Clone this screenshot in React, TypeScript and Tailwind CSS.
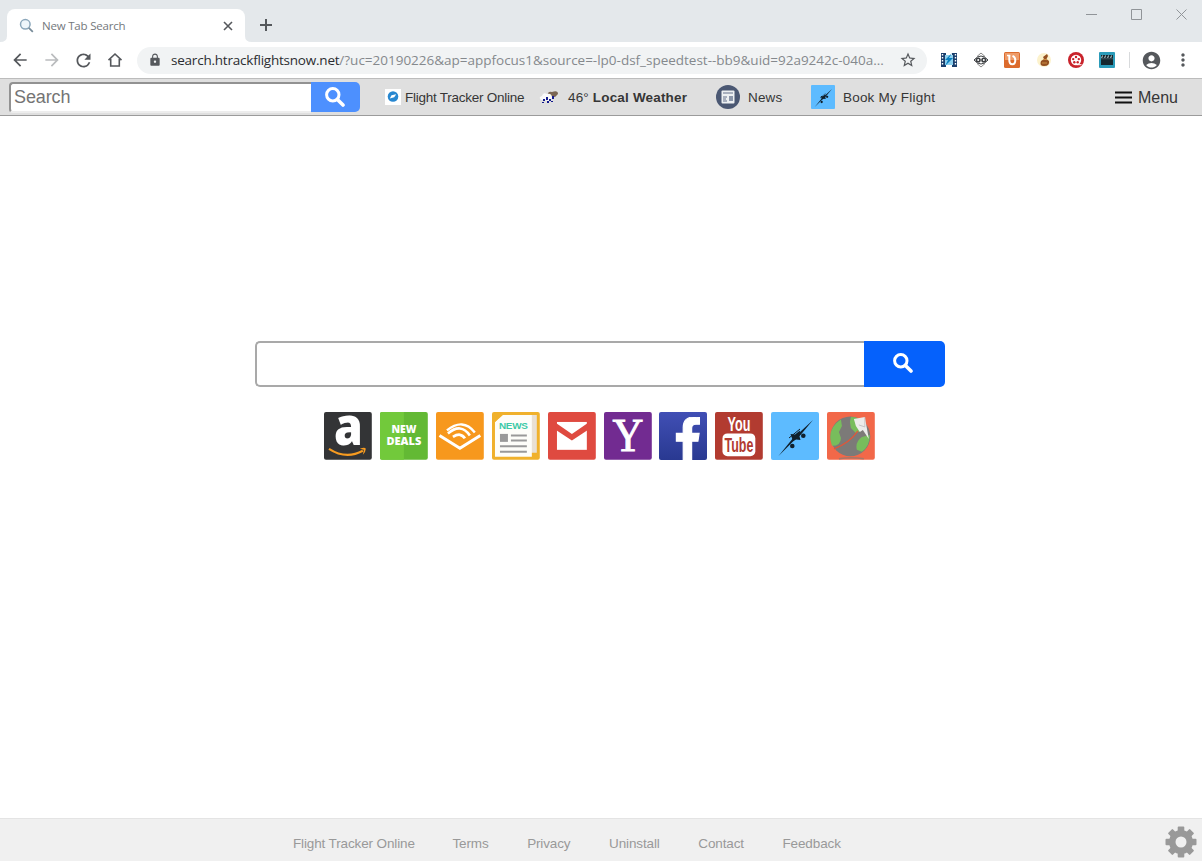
import type { ReactNode } from "react"
import { MdAccountCircle, MdArrowBack, MdArrowForward, MdLock, MdMoreVert, MdRefresh, MdStarBorder } from "react-icons/md"
import { FaFacebookF } from "react-icons/fa"

function SearchIcon({ className }: { className: string }) {
  return (
    <svg viewBox="0 0 20 20" className={className} fill="none" stroke="currentColor">
      <circle cx="7.8" cy="7.8" r="6.2" strokeWidth="3" />
      <path d="M12.4 12.4 18 18" strokeWidth="3.6" strokeLinecap="round" />
    </svg>
  )
}

function Plane({ className }: { className: string }) {
  return (
    <svg viewBox="0 0 48 48" className={className}>
      <rect width="48" height="48" rx="2" fill="#5dbbff" />
      <path d="M7.5 44 20.5 28l3-4 5.5-4L42 8 29.5 23l-4.5 4-3.5 3z" fill="#10202c" />
      <path d="m19.5 22 4.5.5 5-4-.5 6 1 3.5-4.5-.5-3 1.5z" fill="#10202c" />
      <path d="m18 26 11-9" stroke="#10202c" />
      <circle cx="32.3" cy="23.7" r="2.3" fill="#10202c" />
      <circle cx="21.3" cy="34" r="2.3" fill="#10202c" />
    </svg>
  )
}

function TabStrip() {
  return (
    <div className="flex h-[42px] shrink-0 bg-[#e4e8eb]">
      <svg viewBox="0 0 7 6" className="mt-auto h-1.5 w-[7px] fill-white">
        <path d="M7 0v6H0q7 0 7-6" />
      </svg>
      <div className="mt-[9px] flex w-[238px] items-center rounded-t-lg bg-white pl-3 pr-[11px]">
        <svg viewBox="0 0 16 16" className="h-4 w-4" fill="none">
          <circle cx="6.3" cy="6.3" r="4.8" stroke="#8ba7bb" strokeWidth="1.5" fill="#eef6fb" />
          <path d="m9.8 9.8 4 4" stroke="#778b99" strokeWidth="1.8" />
        </svg>
        <span className="ml-[7px] flex-1 whitespace-nowrap text-[11.5px] tracking-[-0.2px] text-[#74787c]">New Tab Search</span>
        <svg viewBox="0 0 12 12" className="h-3 w-3" stroke="#55585c" strokeWidth="1.6">
          <path d="m2 2 8 8M10 2l-8 8" />
        </svg>
      </div>
      <svg viewBox="0 0 7 6" className="mt-auto h-1.5 w-[7px] fill-white">
        <path d="M0 0v6h7q-7 0-7-6" />
      </svg>
      <svg viewBox="0 0 14 14" className="ml-[7px] mt-[18px] h-3.5 w-3.5" stroke="#55585c" strokeWidth="2">
        <path d="M7 1v12M1 7h12" />
      </svg>
      <div className="ml-auto flex gap-[34px] pr-[15px] pt-[9px]">
        {["M0 5.5h11", "M.5.5h10v10H.5z", "m.5.5 10 10m0-10-10 10"].map((d) => (
          <svg key={d} viewBox="0 0 11 11" className="h-[11px] w-[11px]" fill="none" stroke="#909498">
            <path d={d} />
          </svg>
        ))}
      </div>
    </div>
  )
}

function Extensions() {
  return (
    <div className="flex gap-[15.7px]">
      <svg viewBox="0 0 16 16" className="h-4 w-4">
        <path d="M0 1h5v14H0zM11 1h5v14h-5z" fill="#1b3f6d" />
        <path d="M1.5 2v12M14.5 2v12" stroke="#fff" strokeWidth="1.4" strokeDasharray="1.5 1.5" />
        <path d="M4 3h8v10H4z" fill="#8dd0ee" />
        <path d="M11 1 4 8h3l-3 6 8-8H8z" fill="#087fc0" />
      </svg>
      <svg viewBox="0 0 16 16" className="h-4 w-4" fill="none" stroke="#3c3f42">
        <path d="m4 4.5 4-3.5 4 3.5M4 11.5 8 15l4-3.5" stroke="#888" />
        <path d="M1 8q7-8 14 0-7 8-14 0Z" />
        <circle cx="5.2" cy="8" r="1.8" strokeWidth="1.6" />
        <circle cx="10.8" cy="8" r="1.8" strokeWidth="1.6" />
      </svg>
      <svg viewBox="0 0 16 16" className="h-4 w-4">
        <rect width="16" height="16" rx="1.5" fill="#dc6b2d" />
        <path d="M1 1h14v7H1z" fill="#ee9b68" />
        <path d="M5.3 3.5V8q0 4.3 3 4.3t3-4.3q0-3-2.8-4.2" fill="none" stroke="#fff" strokeWidth="2" />
        <path d="M3 3.5h3.3" stroke="#fff" strokeWidth="1.5" />
      </svg>
      <svg viewBox="0 0 16 16" className="h-4 w-4">
        <circle cx="8" cy="8" r="7" fill="#fcf2cc" />
        <path d="M11 2 7 5l1 2-3 2q-2 5 3 5 6 0 5-5l-2.5-2L12 4z" fill="#945021" />
        <path d="m7 7.3 4 .3M6 11h5" stroke="#dba04d" strokeWidth=".8" />
      </svg>
      <svg viewBox="0 0 16 16" className="h-4 w-4">
        <circle cx="8" cy="8" r="8" fill="#c9232b" />
        <circle cx="8" cy="8" r="5.2" fill="#fff" />
        <g fill="#c9232b">
          <circle cx="8" cy="5" r="1.2" />
          <circle cx="5.2" cy="7.1" r="1.2" />
          <circle cx="10.8" cy="7.1" r="1.2" />
          <circle cx="6.3" cy="10.3" r="1.2" />
          <circle cx="9.7" cy="10.3" r="1.2" />
        </g>
        <path d="M9 12.7h4.5" stroke="#fff" />
      </svg>
      <svg viewBox="0 0 16 16" className="h-4 w-4">
        <rect width="16" height="16" rx="1" fill="#2b9bb9" />
        <path d="M2 3h12v10H2z" fill="#15272e" />
        <path d="m3.5 3.5-.8 2.5M6.5 3.5 5.7 6M9.5 3.5 8.7 6M12.5 3.5l-.8 2.5" stroke="#c4d6da" />
        <path d="M2 6.8h12" stroke="#5b7077" strokeWidth=".7" />
      </svg>
    </div>
  )
}

function AddressBar() {
  return (
    <div className="flex h-9 shrink-0 items-center bg-white pl-2.5 text-[#55585c]">
      <MdArrowBack className="h-5 w-5" />
      <MdArrowForward className="ml-3 h-5 w-5 text-[#babcbe]" />
      <MdRefresh className="ml-[11px] h-[21px] w-[21px]" />
      <svg viewBox="0 0 16 16" className="ml-[13px] h-4 w-4" fill="none" stroke="currentColor" strokeWidth="1.6">
        <path d="M1.5 8.2 8 2l6.5 6.2M3.7 7v7h8.6V7" />
      </svg>
      <div className="ml-3.5 flex h-[27px] w-[790px] items-center rounded-full bg-[#f1f3f4] pl-[11px]">
        <MdLock className="h-[14px] w-[14px]" />
        <span className="ml-[9px] w-[718px] whitespace-nowrap pt-px text-[13.5px] tracking-[-0.01px] text-[#85898d]">
          <span className="tracking-[-0.22px] text-[#2b2d30]">search.htrackflightsnow.net</span>
          /?uc=20190226&amp;ap=appfocus1&amp;source=-lp0-dsf_speedtest--bb9&amp;uid=92a9242c-040a...
        </span>
        <MdStarBorder className="ml-2.5 h-[18px] w-[18px]" />
      </div>
      <div className="ml-3.5">
        <Extensions />
      </div>
      <div className="ml-3.5 h-4 w-px bg-[#d8dadc]" />
      <MdAccountCircle className="ml-[11px] h-[21px] w-[21px]" />
      <MdMoreVert className="ml-[11px] h-5 w-5" />
    </div>
  )
}

function ToolBar() {
  return (
    <div className="flex h-[38px] shrink-0 items-center border-y border-t-[#bcbcbc] border-b-[#9b9b9b] bg-[#dfdfdf] pl-[9px] pr-6 font-['Liberation_Sans',sans-serif] text-[13.5px] text-[#363636]">
      <div className="flex h-[31px] w-[302px] items-center rounded-l border-2 border-[#929292] border-b-[#ededed] border-r-0 bg-white pl-[3px] text-[18px] tracking-[-0.1px] text-[#747474]">
        Search
      </div>
      <div className="flex h-[30px] w-[49px] items-center justify-center rounded-r-[5px] bg-[#4d90fe] pb-px pr-0.5 text-white">
        <SearchIcon className="h-5 w-5" />
      </div>
      <svg viewBox="0 0 16 16" className="ml-[25px] h-4 w-4">
        <path d="M0 0h16v16H0z" fill="#fff" />
        <circle cx="8" cy="7.5" r="5.3" fill="#2787d0" />
        <path d="m4.8 9.5 1.7-3.2 4.7-1-2 3z" fill="#fff" />
      </svg>
      <span className="ml-1 w-[120px] whitespace-nowrap pt-0.5 tracking-[-0.25px]">Flight Tracker Online</span>
      <svg viewBox="0 0 20 16" className="ml-[14px] h-4 w-5">
        <path d="M9 7q-1-5 4-4 6-2 6 2l-3 3z" fill="#7b6654" />
        <path d="M2 11q-3-3 1-4 1-4 5-2 5-1 5 4l-2 3z" fill="#fafafa" />
        <path d="M5 10v2M8 8v3M11 10v2M14 7v3M9 12v2M4 13v1M13 12v1" stroke="#141b8e" strokeWidth="2" />
      </svg>
      <span className="ml-[9px] w-[120px] whitespace-nowrap pt-0.5 tracking-[0.17px]">46° <b>Local Weather</b></span>
      <svg viewBox="0 0 24 24" className="ml-7 h-6 w-6">
        <circle cx="12" cy="12" r="12" fill="#4b5873" />
        <rect x="5.5" y="5.5" width="13" height="13" rx="1" fill="#edf0f2" />
        <path d="M7 8h10M7 12h4M7 14h3M7 16h4" stroke="#65718a" />
        <path d="M13 11h4v5h-4z" fill="#8b96aa" />
      </svg>
      <span className="ml-2 w-[35px] pt-0.5 tracking-[0.17px]">News</span>
      <Plane className="ml-7 h-6 w-6" />
      <span className="ml-2 whitespace-nowrap pt-0.5 tracking-[0.2px]">Book My Flight</span>
      <svg viewBox="0 0 17 13" className="ml-auto h-[13px] w-[17px]" stroke="#111" strokeWidth="2">
        <path d="M0 1.5h17M0 6.5h17M0 11.5h17" />
      </svg>
      <span className="ml-1.5 pt-0.5 text-base">Menu</span>
    </div>
  )
}

function Tile({ className = "", children }: { className?: string; children: ReactNode }) {
  return <div className={`h-12 w-[47.8px] rounded-xs ${className}`}>{children}</div>
}

function Shortcuts() {
  return (
    <div className="mt-[25px] flex gap-[8.05px] pl-[324.4px]">
      <Tile>
        <svg viewBox="0 0 48 48" className="overflow-visible">
          <rect width="48" height="48" rx="2" fill="#333436" />
          <text x="24.5" y="33.5" textAnchor="middle" fontSize="52" fontWeight="800" textLength="29" lengthAdjust="spacingAndGlyphs" fill="#fff" fontFamily="Open Sans">a</text>
          <path d="M5 37q17 11 34 2" fill="none" stroke="#f79b20" strokeWidth="2.2" />
          <path d="M36 37q5-2 6 0 0 3-3 6 1-4 1-5z" fill="#f79b20" />
        </svg>
      </Tile>
      <Tile>
        <svg viewBox="0 0 48 48" fontFamily="Open Sans" fontWeight="800" fontSize="10.5" fill="#fff" textAnchor="middle">
          <rect width="48" height="48" rx="2" fill="#63b934" />
          <path d="M2 0h22v48H2q-2 0-2-2V2q0-2 2-2z" fill="#72c93b" />
          <text x="24" y="21.5" textLength="25" lengthAdjust="spacingAndGlyphs">NEW</text>
          <text x="24" y="33.5" textLength="35" lengthAdjust="spacingAndGlyphs">DEALS</text>
        </svg>
      </Tile>
      <Tile>
        <svg viewBox="0 0 48 48" fill="none" stroke="#fff">
          <rect width="48" height="48" rx="2" fill="#f7981d" stroke="none" />
          <path d="m3.5 23.5 20.5 13 20.5-13" strokeWidth="3" />
          <path d="M11 18.5Q27 5.5 39 20.5" strokeWidth="2.4" />
          <path d="M12 21.5Q25 10.5 34 23.5" strokeWidth="2.6" />
          <path d="M17 25q8-5 12 1.5" strokeWidth="2.8" />
        </svg>
      </Tile>
      <Tile>
        <svg viewBox="0 0 48 48">
          <rect width="48" height="48" rx="2" fill="#f0b12c" />
          <path d="M9 3h36v38H9z" fill="#e9e0d4" />
          <path d="M3 10 10 3h30v42H3z" fill="#fdfdf9" />
          <path d="M3 10V6l4-3h4z" fill="#f0b12c" />
          <text x="7" y="17.5" fontFamily="Liberation Sans" fontWeight="700" fontSize="10" textLength="29" fill="#3dcaa7">NEWS</text>
          <path d="M8 22h8v8H8z" fill="#999" />
          <path d="M19 23.5h16M19 28.5h16M8 34.5h27M8 40h27" stroke="#999" strokeWidth="2" />
        </svg>
      </Tile>
      <Tile>
        <svg viewBox="0 0 48 48">
          <rect width="48" height="48" rx="2" fill="#df4a40" />
          <path d="M9 10h30v28H9z" fill="#fff" />
          <path d="M8 11v7l16 10.5L40 18v-7L24 22z" fill="#df4a40" />
        </svg>
      </Tile>
      <Tile>
        <svg viewBox="0 0 48 48" className="overflow-visible">
          <rect width="48" height="48" rx="2" fill="#722b91" />
          <text x="24" y="39" textAnchor="middle" fontFamily="Liberation Serif" fontSize="46" textLength="31" lengthAdjust="spacingAndGlyphs" fill="#fff" stroke="#fff" strokeWidth="1">Y</text>
        </svg>
      </Tile>
      <Tile className="flex items-end bg-linear-to-b from-[#414fb5] to-[#293991]">
        <FaFacebookF className="ml-2.5 h-[43px] w-[43px] stroke-white stroke-[14px] text-white" />
      </Tile>
      <Tile>
        <svg viewBox="0 0 48 48" className="overflow-visible" fontFamily="Liberation Sans" fontWeight="700" fontSize="21" textAnchor="middle">
          <rect width="48" height="48" rx="2" fill="#b23b30" />
          <text x="24" y="19.5" textLength="23" lengthAdjust="spacingAndGlyphs" fill="#fff">You</text>
          <rect x="7.5" y="21.5" width="33" height="23" rx="5" fill="#fff" />
          <text x="24" y="40.5" textLength="29" lengthAdjust="spacingAndGlyphs" fill="#b23b30">Tube</text>
        </svg>
      </Tile>
      <Tile>
        <Plane className="h-12 w-12" />
      </Tile>
      <Tile>
        <svg viewBox="0 0 48 48">
          <rect width="48" height="48" rx="2" fill="#f26849" />
          <circle cx="23.5" cy="24.5" r="20" fill="#7c7a78" />
          <path d="M14 7.5Q-1 17 5 34q9 0 9-8l-2-6 3-6zM24 5q8 0 12 5l-2 9-5 2-5-5-1-6zM35 25l8-2q0 11-8 17l-5-2q-2-8 5-13z" fill="#78bd5c" />
          <path d="m27 7 11-2 4 22-6-9-3 2-4-6z" fill="#ececea" />
          <path d="M38 5v10l-6-2" fill="none" stroke="#bbb" strokeWidth=".8" />
          <path d="M7 37q16-6 24-18" fill="none" stroke="#df573a" strokeWidth="1.3" />
          <path d="M12 47q12-2 25 0" fill="none" stroke="#a77768" strokeWidth="1.6" />
        </svg>
      </Tile>
    </div>
  )
}

function Footer() {
  return (
    <footer className="flex h-[43px] shrink-0 border-t border-[#e4e4e4] bg-[#f0f0f0] pl-[293px] font-['Liberation_Sans',sans-serif] text-[13.5px] tracking-[-0.13px] text-[#999]">
      <div className="flex h-full items-center gap-[38.6px] pt-2">
        {["Flight Tracker Online", "Terms", "Privacy", "Uninstall", "Contact", "Feedback"].map((item) => (
          <a key={item} href="#" className="first:-mr-[1px]">{item}</a>
        ))}
      </div>
      <svg viewBox="0 0 32 32" className="ml-auto mr-[5px] mt-[7px] h-8 w-8" fill="#999">
        {[0, 45, 90, 135].map((angle) => (
          <rect key={angle} x="12.7" y="0.5" width="6.6" height="31" rx="1" transform={`rotate(${angle} 16 16)`} />
        ))}
        <circle cx="16" cy="16" r="12" />
        <circle cx="16" cy="16" r="5.5" fill="#f0f0f0" />
      </svg>
    </footer>
  )
}

export default function App() {
  return (
    <div className="flex h-[861px] w-[1202px] flex-col overflow-hidden bg-white font-['Open_Sans',sans-serif]">
      <TabStrip />
      <AddressBar />
      <ToolBar />
      <main className="flex-1 pt-[225px]">
        <div className="ml-[255px] flex h-[46px] w-[690px]">
          <div className="flex-1 rounded-l-[5px] border-2 border-r-0 border-[#a9a9a9]" />
          <div className="flex w-[81px] items-center justify-center rounded-r-[5px] bg-[#0561fc] pb-0.5 pr-1 text-white">
            <SearchIcon className="h-5 w-5" />
          </div>
        </div>
        <Shortcuts />
      </main>
      <Footer />
    </div>
  )
}
